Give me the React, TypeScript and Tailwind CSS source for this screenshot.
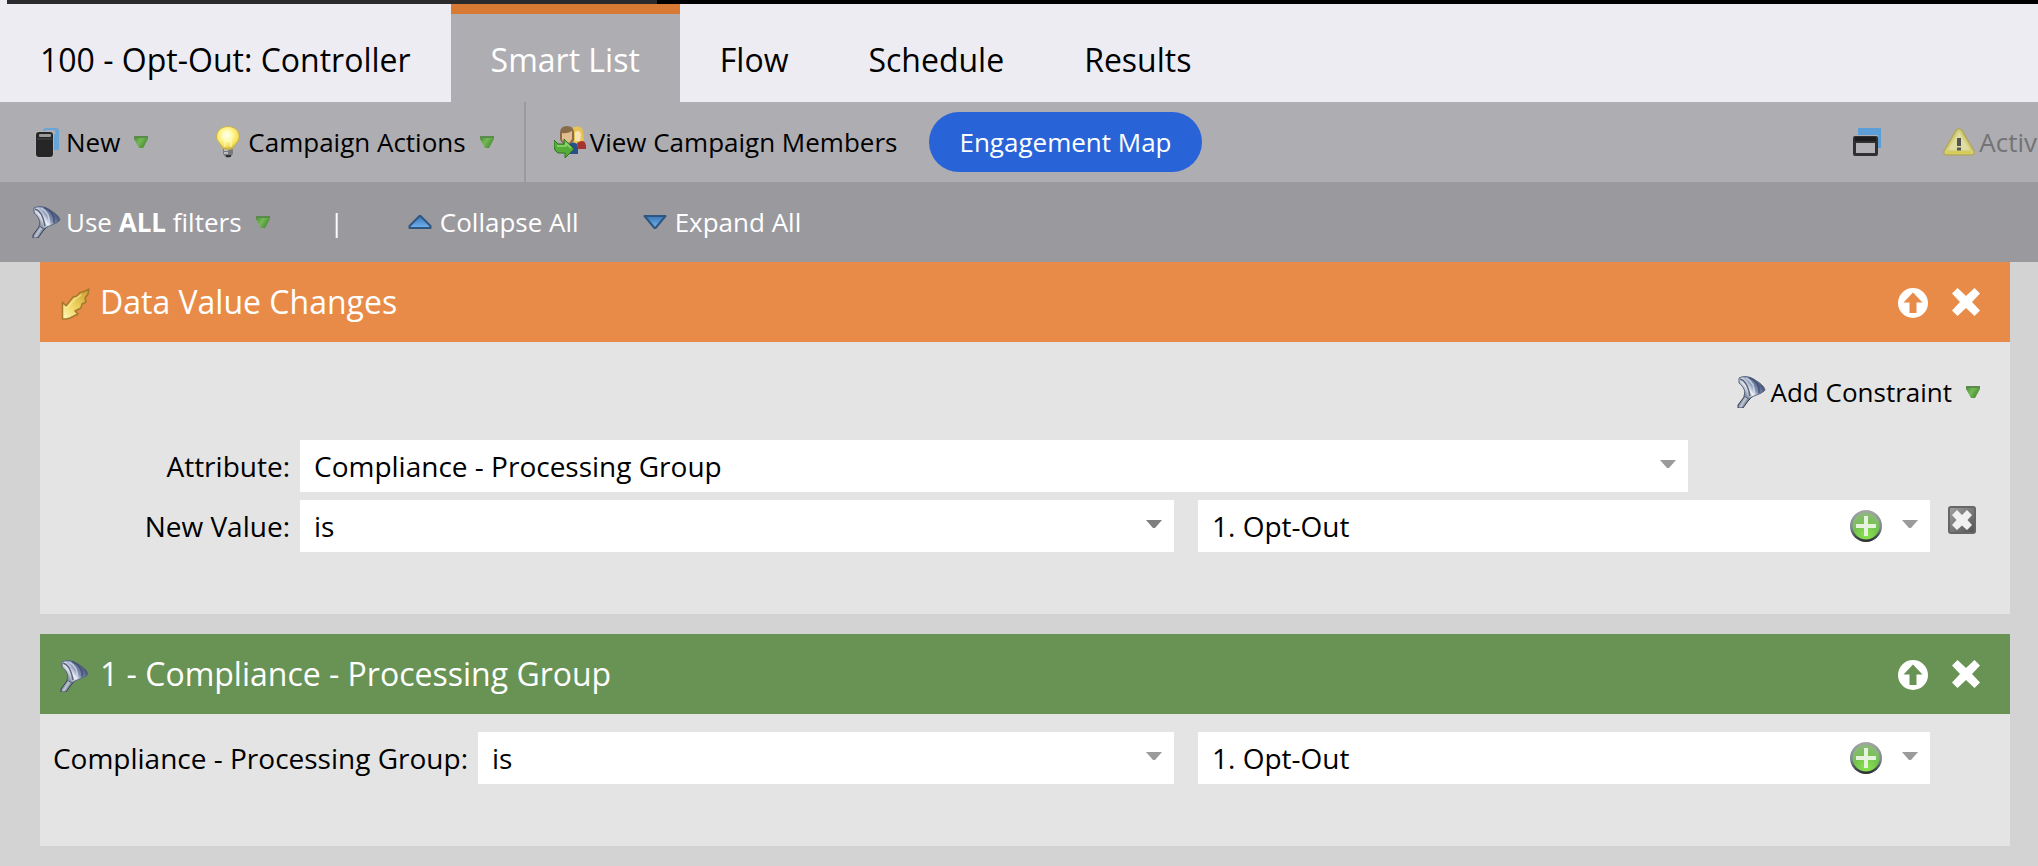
import type { ReactNode } from "react";

function FunnelIcon() {
  return (
    <svg className="size-8 shrink-0" viewBox="0 0 32 32" aria-hidden="true">
      <defs>
        <linearGradient id="funnelBody" x1="8" y1="18" x2="24" y2="6" gradientUnits="userSpaceOnUse">
          <stop offset="0" stopColor="#8b96aa" />
          <stop offset="0.3" stopColor="#eef2f8" />
          <stop offset="0.55" stopColor="#8492b4" />
          <stop offset="1" stopColor="#3c4a70" />
        </linearGradient>
        <linearGradient id="funnelSpout" x1="4" y1="22" x2="12" y2="27" gradientUnits="userSpaceOnUse">
          <stop offset="0" stopColor="#47536a" />
          <stop offset="0.45" stopColor="#c3cbd8" />
          <stop offset="1" stopColor="#303a4e" />
        </linearGradient>
      </defs>
      <path d="M8 16 L7 21 L1 29 V32 H6 L11 25 L17 19Z" fill="url(#funnelSpout)" stroke="#38435a" strokeWidth="1" />
      <path d="M2 2 C7 -0.500 13 0.500 18 4 C23 7 27 10 28 14 C26 17 19 19 15 21 L12 23 L7 20 C9 16 7 11 2 7Z" fill="url(#funnelBody)" stroke="#56627c" strokeWidth="1" />
      <path d="M3 3 C7 4 11 9 13 20" fill="none" stroke="#5d6880" strokeWidth="1.500" />
      <path d="M9 2 C15 5 18 10 17 18" fill="none" stroke="#dfe5ef" strokeWidth="1.500" opacity="0.7" />
      <path d="M12 1.500 C20 5 23 10 22 17" fill="none" stroke="#3c486a" strokeWidth="1.500" opacity="0.7" />
    </svg>
  );
}

function GreenCaret() {
  return (
    <svg className="h-3 w-3.5 shrink-0" viewBox="0 0 14 12" aria-hidden="true">
      <defs>
        <linearGradient id="greenCaret" x1="0" y1="0" x2="1" y2="0.6">
          <stop offset="0" stopColor="#4a8436" />
          <stop offset="0.5" stopColor="#74b955" />
          <stop offset="1" stopColor="#47882f" />
        </linearGradient>
      </defs>
      <path d="M0 0 H14 V3 L9 12 H5 L0 3Z" fill="url(#greenCaret)" />
      <path d="M0 1 H14" stroke="#5a8a4c" strokeWidth="2" />
    </svg>
  );
}

function NewIcon() {
  return (
    <svg className="size-8 shrink-0" viewBox="0 0 32 32" aria-hidden="true">
      <path d="M11 5 Q11 2 14 2 H24 Q27 2 27 5 V24 H21 V9 L18 5Z" fill="#69a6d8" />
      <path d="M13 5 H22 L23 8" fill="none" stroke="#a9aeb6" strokeWidth="2" />
      <rect x="3" y="5" width="19" height="27" rx="3" fill="#b5b5b7" />
      <rect x="4" y="6" width="17" height="25" rx="3" fill="#262626" />
      <rect x="7" y="8" width="12" height="3" rx="1" fill="#9b9b9b" />
      <path d="M5 13 H20" stroke="#474747" />
    </svg>
  );
}

function BulbIcon() {
  return (
    <svg className="size-8 shrink-0" viewBox="0 0 32 32" aria-hidden="true">
      <defs>
        <radialGradient id="bulbGlass" cx="0.45" cy="0.38" r="0.6">
          <stop offset="0" stopColor="#ffffff" />
          <stop offset="0.4" stopColor="#fff9a0" />
          <stop offset="0.8" stopColor="#f6e05a" />
          <stop offset="1" stopColor="#c8b045" />
        </radialGradient>
      </defs>
      <path d="M9 22 H19 V27 Q18 31 14 32 Q10 31 9 27Z" fill="#777a7d" />
      <path d="M10 24 H14 M10 27 H14" stroke="#d5d8da" strokeWidth="1.500" />
      <path d="M12 30 H17" stroke="#2e2f31" strokeWidth="2" />
      <path d="M14 0.500 C21 0.500 25.500 5 25.500 11 C25.500 16 20 18 19.500 22.500 Q14 24.500 8.500 22.500 C8 18 2.500 16 2.500 11 C2.500 5 7 0.500 14 0.500Z" fill="url(#bulbGlass)" stroke="#c5ae50" strokeWidth="1" />
      <path d="M11 21 V13 L14 16 L17 13 V21" fill="none" stroke="#fffbd0" strokeWidth="1" />
    </svg>
  );
}

function MembersIcon() {
  return (
    <svg className="size-8 shrink-0" viewBox="0 0 32 32" aria-hidden="true">
      <path d="M18 2 Q27 -2 29 5 L30 17 H20Z" fill="#e7c455" />
      <path d="M21 6 Q26 3 27 9 L26 15 H21Z" fill="#f7e3b6" />
      <path d="M23 17 Q31 12 32 20 V23 H24Z" fill="#a8342f" />
      <path d="M16 17 Q24 15 24 23 V28 H15Z" fill="#28518c" />
      <path d="M6 7 Q6 0 13 0 Q20 0 20 7 V14 Q18 18 13 18 Q7 18 6 13Z" fill="#8a6b47" />
      <path d="M8 7 Q13 8 18 5 V13 Q16 17 13 17 Q9 17 8 13Z" fill="#e3bd92" />
      <path d="M0 14 L4 18 H10 V13 L20 23 L11 32 V27 H4 Q0 25 0 20Z" fill="#55ac38" stroke="#2f7322" strokeWidth="1" />
      <path d="M3 20 H12 V17 L17 22" fill="none" stroke="#94d676" strokeWidth="1.500" />
    </svg>
  );
}

function WindowsIcon() {
  return (
    <svg className="size-7" viewBox="0 0 28 28" aria-hidden="true">
      <path d="M5 0 H28 V20 H25 V7 H5Z" fill="#5b9fd6" />
      <rect x="0" y="8" width="25" height="20" rx="2" fill="#303032" />
      <rect x="3" y="15" width="19" height="10" fill="#b2b1b5" />
      <path d="M2 11 H23" stroke="#1c1c1c" strokeWidth="4" />
    </svg>
  );
}

function WarningIcon() {
  return (
    <svg className="h-7 w-8 shrink-0" viewBox="0 0 32 28" aria-hidden="true">
      <path d="M13 2.500 Q16 -1 19 2.500 L31 23 Q32 27 28 27 H4 Q0 27 1 23Z" fill="#d6cf7a" stroke="#b3a95f" strokeWidth="1.500" />
      <path d="M16 4 L27 22 H5Z" fill="#e0dda4" />
      <path d="M4 24.500 H28" stroke="#d8cc4c" strokeWidth="2" />
      <path d="M16 10 V18" stroke="#55554f" strokeWidth="4" />
      <path d="M14 21 H18" stroke="#55554f" strokeWidth="3" />
    </svg>
  );
}

function BlueTriangle({ down = false }: { down?: boolean }) {
  return (
    <svg className="h-3.5 w-6 shrink-0" viewBox="0 0 24 14" aria-hidden="true">
      <defs>
        <linearGradient id="blueTriangle" x1="0" y1="0" x2="0" y2="1">
          <stop offset="0" stopColor="#3a76b8" />
          <stop offset="1" stopColor="#74b2ee" />
        </linearGradient>
      </defs>
      <path
        d={down ? "M1.500 1 H22.500 L12.500 13 H11.500Z" : "M11.500 1 H12.500 L22.500 11 V13 H1.500 V11Z"}
        fill="url(#blueTriangle)"
        stroke="#2f5680"
        strokeWidth="2"
        strokeLinejoin="round"
      />
    </svg>
  );
}

function TriggerArrowIcon() {
  return (
    <svg className="size-8 shrink-0" viewBox="0 0 32 32" aria-hidden="true">
      <defs>
        <linearGradient id="triggerArrow" x1="0" y1="1" x2="1" y2="0">
          <stop offset="0" stopColor="#fff9c0" />
          <stop offset="0.4" stopColor="#f1d765" />
          <stop offset="1" stopColor="#c99a30" />
        </linearGradient>
      </defs>
      <path d="M2.500 14 L6 18 L13 9 L17 8 L20 4.500 L23 4 L29 1 L28 6 L25 10 L26 14 L22 16 L21 20 L15 23 L18 26 L10 30 L6 31 H2.500Z" fill="url(#triggerArrow)" stroke="#a37a2b" strokeWidth="1.500" strokeLinejoin="round" />
      <path d="M4 18 L7 20 L15 11 L21 7" fill="none" stroke="#fbeb9a" strokeWidth="1.500" opacity="0.8" />
    </svg>
  );
}

function MoveUpIcon() {
  return (
    <svg className="size-[30px]" viewBox="0 0 30 30" aria-hidden="true">
      <path fillRule="evenodd" d="M15 0 A15 15 0 1 1 15 30 A15 15 0 1 1 15 0Z M15 4.500 L5.500 14.500 H11.500 V25 H18.500 V14.500 H24.500Z" fill="#ffffff" />
    </svg>
  );
}

function RemoveIcon() {
  return (
    <svg className="size-7" viewBox="0 0 28 28" aria-hidden="true">
      <path d="M5.500 0 L14 8 L22.500 0 L28 5.500 L20 14 L28 22.500 L22.500 28 L14 20 L5.500 28 L0 22.500 L8 14 L0 5.500Z" fill="#ffffff" />
    </svg>
  );
}

function PlusIcon() {
  return (
    <svg className="size-8" viewBox="0 0 32 32" aria-hidden="true">
      <defs>
        <linearGradient id="plusRim" x1="0" y1="0" x2="0" y2="1">
          <stop offset="0" stopColor="#a5a7a7" />
          <stop offset="0.55" stopColor="#7d8890" />
          <stop offset="1" stopColor="#23272c" />
        </linearGradient>
        <radialGradient id="plusFace" cx="0.5" cy="0.85" r="0.8">
          <stop offset="0" stopColor="#8be44f" />
          <stop offset="0.55" stopColor="#72c44c" />
          <stop offset="1" stopColor="#8fb87e" />
        </radialGradient>
      </defs>
      <circle cx="16" cy="16" r="16" fill="url(#plusRim)" />
      <circle cx="16" cy="16" r="13.500" fill="url(#plusFace)" />
      <path d="M16 6 V26 M6 16 H26" stroke="#e6f2de" strokeWidth="4" />
    </svg>
  );
}

function BoxedRemoveIcon() {
  return (
    <svg className="size-7" viewBox="0 0 28 28" aria-hidden="true">
      <defs>
        <linearGradient id="boxedRemove" x1="0" y1="0" x2="1" y2="1">
          <stop offset="0" stopColor="#a3a3a3" />
          <stop offset="1" stopColor="#505050" />
        </linearGradient>
      </defs>
      <rect x="1" y="1" width="26" height="26" rx="2" fill="url(#boxedRemove)" stroke="#666666" strokeWidth="2" />
      <path d="M9 4 L14 9 L19 4 L24 9 L19.500 14 L24 19 L19 24 L14 19.500 L9 24 L4 19 L8.500 14 L4 9Z" fill="#f1f1f1" />
    </svg>
  );
}

function FieldCaret({ dark = false }: { dark?: boolean }) {
  return (
    <svg className="h-2 w-4" viewBox="0 0 16 8" aria-hidden="true">
      <path d="M0 0 H16 L9 8 H7Z" fill={dark ? "#7f7f7f" : "#9b9b9b"} />
    </svg>
  );
}

function SelectField({ id, value, dark }: { id: string; value: string; dark?: boolean }) {
  return (
    <div className="relative h-[52px] min-w-0 flex-1 bg-white">
      <select id={id} defaultValue={value} className="h-full w-full appearance-none bg-transparent pr-10 pl-3.5 text-[28px] text-black">
        <option value={value}>{value}</option>
      </select>
      <span className="pointer-events-none absolute top-5 right-3">
        <FieldCaret dark={dark} />
      </span>
    </div>
  );
}

function ValueField({ label }: { label: string }) {
  return (
    <div className="flex h-[52px] items-center bg-white pr-3">
      <input aria-label={label} defaultValue="1. Opt-Out" className="h-full min-w-0 flex-1 bg-transparent pl-3.5 text-[28px] text-black" />
      <button type="button" aria-label="Add value">
        <PlusIcon />
      </button>
      <button type="button" aria-label="Show values" className="ml-5 pb-1">
        <FieldCaret />
      </button>
    </div>
  );
}

function FilterCard({ icon, title, color, children }: { icon: ReactNode; title: string; color: string; children: ReactNode }) {
  return (
    <section className="bg-[#e4e4e4]">
      <header className={`flex h-20 items-center pr-[30px] pl-5 text-white ${color}`}>
        <span className="pt-1">{icon}</span>
        <h2 className="ml-2 flex-1 text-[32px]">{title}</h2>
        <button type="button" aria-label="Move up" className="pt-0.5">
          <MoveUpIcon />
        </button>
        <button type="button" aria-label="Remove" className="ml-6">
          <RemoveIcon />
        </button>
      </header>
      {children}
    </section>
  );
}

export default function App() {
  return (
    <div className="min-h-screen overflow-hidden bg-[#d3d3d3] font-['Open_Sans',sans-serif] text-[26px] whitespace-nowrap text-black">
      <div className="flex h-1 bg-black">
        <div className="w-[7px] bg-[#edecf2]" />
        <div className="w-[650px] bg-[#2b2b2d]" />
      </div>

      <nav className="flex h-[98px] bg-[#edecf2] text-[32px]">
        <a href="#campaign" className="flex items-center px-10 pt-3.5">100 - Opt-Out: Controller</a>
        <a href="#smart-list" aria-current="page" className="flex items-center border-t-[10px] border-[#d87a33] bg-[#aeadb2] px-10 pt-1 text-white">Smart List</a>
        <a href="#flow" className="flex items-center px-10 pt-3.5">Flow</a>
        <a href="#schedule" className="flex items-center px-10 pt-3.5">Schedule</a>
        <a href="#results" className="flex items-center px-10 pt-3.5">Results</a>
      </nav>

      <div className="flex h-20 items-center bg-[#aeadb2] pl-8">
        <button type="button" className="flex items-center">
          <NewIcon />
          <span className="ml-0.5">New</span>
          <span className="ml-3.5"><GreenCaret /></span>
        </button>
        <button type="button" className="ml-[66px] flex items-center">
          <BulbIcon />
          <span className="ml-0.5">Campaign Actions</span>
          <span className="ml-3.5"><GreenCaret /></span>
        </button>
        <div className="mr-7 ml-[30px] h-full w-0.5 bg-[#9a999e]" />
        <button type="button" className="flex items-center">
          <MembersIcon />
          <span className="ml-1">View Campaign Members</span>
        </button>
        <button type="button" className="ml-8 h-[60px] rounded-full bg-[#2864d8] px-[30px] text-white">Engagement Map</button>
        <button type="button" aria-label="Open in new window" className="ml-auto">
          <WindowsIcon />
        </button>
        <button type="button" disabled className="ml-[62px] flex items-center pr-px text-[#737375]">
          <WarningIcon />
          <span className="ml-1">Activ</span>
        </button>
      </div>

      <div className="flex h-20 items-center bg-[#9a999e] pl-8 text-white">
        <button type="button" className="flex items-center">
          <FunnelIcon />
          <span className="ml-0.5">Use <b>ALL</b> filters</span>
          <span className="ml-3.5"><GreenCaret /></span>
        </button>
        <span className="ml-[60px]">|</span>
        <button type="button" className="ml-16 flex items-center">
          <BlueTriangle />
          <span className="ml-2">Collapse All</span>
        </button>
        <button type="button" className="ml-16 flex items-center">
          <BlueTriangle down />
          <span className="ml-2">Expand All</span>
        </button>
      </div>

      <main className="flex flex-col gap-5 pr-7 pb-5 pl-10">
        <FilterCard icon={<TriggerArrowIcon />} title="Data Value Changes" color="bg-[#e98b48]">
          <div className="pt-8 pb-[62px]">
            <div className="flex h-9 justify-end pr-[30px]">
              <button type="button" className="flex items-center">
                <FunnelIcon />
                <span className="ml-0.5">Add Constraint</span>
                <span className="ml-3.5"><GreenCaret /></span>
              </button>
            </div>
            <div className="mt-[30px] flex items-center gap-2.5 pr-[322px]">
              <label htmlFor="attribute" className="w-[250px] text-right text-[28px]">Attribute:</label>
              <SelectField id="attribute" value="Compliance - Processing Group" />
            </div>
            <div className="mt-2 grid grid-cols-[3fr_2fr_80px]">
              <div className="flex items-center gap-2.5">
                <label htmlFor="new-value" className="w-[250px] text-right text-[28px]">New Value:</label>
                <SelectField id="new-value" value="is" dark />
              </div>
              <div className="pl-6">
                <ValueField label="New value" />
              </div>
              <button type="button" aria-label="Remove constraint" className="mt-1.5 ml-[18px] size-7">
                <BoxedRemoveIcon />
              </button>
            </div>
          </div>
        </FilterCard>

        <FilterCard icon={<FunnelIcon />} title="1 - Compliance - Processing Group" color="bg-[#699354]">
          <div className="grid grid-cols-[3fr_2fr_80px] pt-[18px] pb-[62px]">
            <div className="flex items-center gap-2.5">
              <label htmlFor="processing-group" className="w-[428px] text-right text-[28px]">Compliance - Processing Group:</label>
              <SelectField id="processing-group" value="is" />
            </div>
            <div className="pl-6">
              <ValueField label="Processing group" />
            </div>
          </div>
        </FilterCard>
      </main>
    </div>
  );
}
